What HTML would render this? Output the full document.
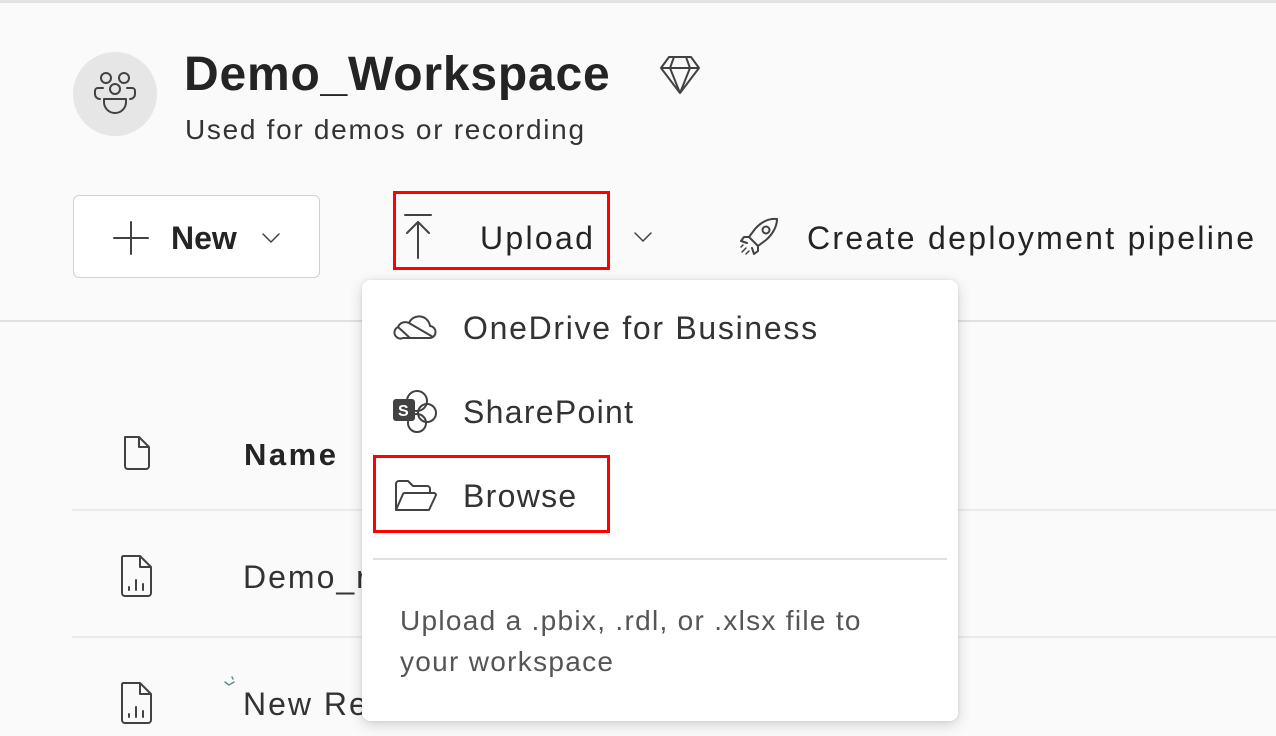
<!DOCTYPE html>
<html><head><meta charset="utf-8"><style>
*{margin:0;padding:0;box-sizing:border-box}
body{width:1276px;height:736px;background:#fafafa;position:relative;overflow:hidden;font-family:"Segoe UI","Liberation Sans",sans-serif;color:#242424}
.a{position:absolute;white-space:nowrap}
svg{position:absolute;fill:none;stroke:#424242;stroke-width:2;stroke-linecap:round;stroke-linejoin:round}
</style></head><body>
<div class="a" style="left:0;top:0;width:1276px;height:3px;background:#e3e3e3"></div>
<div class="a" style="left:73px;top:52px;width:84px;height:84px;border-radius:50%;background:#e6e6e6"></div>
<svg style="left:90px;top:70px" width="50" height="50" viewBox="0 0 50 50">
<circle cx="16" cy="8" r="5"/><circle cx="34" cy="8" r="5"/><circle cx="25" cy="19" r="5"/>
<path d="M5 21a3 3 0 0 1 3-3h5M45 21a3 3 0 0 0-3-3h-5M5 21v3a5 5 0 0 0 5 5M45 21v3a5 5 0 0 1-5 5"/>
<path d="M14 29h22v3a11 11 0 0 1-22 0z"/></svg>
<div class="a" style="left:184px;top:47px;font-size:48px;font-weight:600;letter-spacing:0.8px">Demo_Workspace</div>
<svg style="left:658px;top:54px" width="44" height="42" viewBox="0 0 44 42"><path d="M11 3h22l8 11-19 25L3 14z M3 14h38 M16 3l-4 11 10 25 10-25-4-11"/></svg>
<div class="a" style="left:185px;top:114px;font-size:28px;color:#333;letter-spacing:1.7px">Used for demos or recording</div>

<div class="a" style="left:73px;top:195px;width:247px;height:83px;border:1px solid #d1d1d1;border-radius:6px;background:#fff"></div>
<svg style="left:111px;top:220px" width="40" height="36" viewBox="0 0 40 36"><path d="M20 2v32M3 18h34"/></svg>
<div class="a" style="left:171px;top:220px;font-size:32px;font-weight:600">New</div>
<svg style="left:261px;top:232px" width="20" height="12" viewBox="0 0 20 12"><path d="M2 2l8 8 8-8" style="stroke-width:1.5"/></svg>
<div class="a" style="left:393px;top:191px;width:217px;height:79px;border:3px solid #f00"></div>
<svg style="left:402px;top:212px" width="32" height="48" viewBox="0 0 32 48"><path d="M3 3h26M16 46V10M5 21l11-11 11 11"/></svg>
<div class="a" style="left:480px;top:220px;font-size:32px;letter-spacing:2.3px">Upload</div>
<svg style="left:633px;top:231px" width="20" height="12" viewBox="0 0 20 12"><path d="M2 2l8 8 8-8" style="stroke-width:1.5"/></svg>
<svg style="left:737px;top:215px" width="46" height="44" viewBox="0 0 46 44"><path d="M40 4c-8-1-16 3-22 10l-6 8 9 9 8-6c7-6 11-14 11-21zM12 22l-5 0-3 4 6 2M21 31v5l-4 3-2-6"/><circle cx="29" cy="15" r="3.5"/><path d="M9 33l-4 4M12 36l-3 3M6 30l-2 2" style="stroke-width:1.5"/></svg>
<div class="a" style="left:807px;top:220px;font-size:32px;letter-spacing:2.3px">Create deployment pipeline</div>

<div class="a" style="left:0;top:320px;width:1276px;height:2px;background:#e0e0e0"></div>
<svg style="left:120px;top:434px" width="34" height="38" viewBox="0 0 34 38"><path d="M5 3h14l10 10v19a3 3 0 0 1-3 3H8a3 3 0 0 1-3-3z M19 3v10h10"/></svg>
<div class="a" style="left:244px;top:437px;font-size:31px;font-weight:600;letter-spacing:2.5px">Name</div>
<div class="a" style="left:72px;top:509px;width:1204px;height:2px;background:#ebebeb"></div>
<svg style="left:116px;top:553px" width="40" height="46" viewBox="0 0 40 46"><path d="M7 3h17l11 11v26a3 3 0 0 1-3 3H9a3 3 0 0 1-3-3V5a2 2 0 0 1 1-2zM24 3v11h11M13 37v-3M20 37v-10M27 37v-6"/></svg>
<div class="a" style="left:243px;top:559px;font-size:32px;color:#333;letter-spacing:2px">Demo_r</div>
<div class="a" style="left:72px;top:636px;width:1204px;height:2px;background:#ebebeb"></div>
<svg style="left:116px;top:680px" width="40" height="46" viewBox="0 0 40 46"><path d="M7 3h17l11 11v26a3 3 0 0 1-3 3H9a3 3 0 0 1-3-3V5a2 2 0 0 1 1-2zM24 3v11h11M13 37v-3M20 37v-10M27 37v-6"/></svg>
<div class="a" style="left:243px;top:686px;font-size:32px;color:#333;letter-spacing:2px">New Re</div>
<svg style="left:222px;top:674px" width="16" height="14" viewBox="0 0 16 14" style="stroke:#4a8a80"><path d="M3 8l4 3 5-3M10 3l1 2" style="stroke:#5b9189;stroke-width:1.5"/></svg>

<div class="a" style="left:362px;top:280px;width:596px;height:441px;background:#fff;border-radius:8px;box-shadow:0 4px 14px rgba(0,0,0,.16),0 0 3px rgba(0,0,0,.1)"></div>
<svg style="left:393px;top:312px" width="44" height="30" viewBox="0 0 44 30"><path d="M10 26h26a6 6 0 0 0 1-12 11 11 0 0 0-21-3 8 8 0 0 0-11 4 6 6 0 0 0 5 11zM5 15l12 11M16 11l24 14"/></svg>
<div class="a" style="left:463px;top:310px;font-size:32px;color:#333;letter-spacing:1.7px">OneDrive for Business</div>
<svg style="left:391px;top:388px" width="48" height="46" viewBox="0 0 48 46"><circle cx="26" cy="13" r="10"/><circle cx="36" cy="25" r="9"/><circle cx="26" cy="35" r="9"/><rect x="3" y="12" width="20" height="20" rx="2" fill="#424242"/><text x="7" y="28" font-size="16" font-weight="bold" fill="#fff" stroke="none" font-family="Liberation Sans">S</text></svg>
<div class="a" style="left:463px;top:394px;font-size:32px;color:#333;letter-spacing:1.3px">SharePoint</div>
<div class="a" style="left:373px;top:455px;width:237px;height:78px;border:3px solid #f00"></div>
<svg style="left:392px;top:478px" width="46" height="36" viewBox="0 0 46 36"><path d="M4 32V6a3 3 0 0 1 3-3h9l5 5h14a3 3 0 0 1 3 3v4 M4 32l7-16a2 2 0 0 1 2-1h29a2 2 0 0 1 2 2l-7 15z"/></svg>
<div class="a" style="left:463px;top:478px;font-size:32px;color:#333;letter-spacing:1.3px">Browse</div>
<div class="a" style="left:373px;top:558px;width:574px;height:2px;background:#e0e0e0"></div>
<div class="a" style="left:400px;top:600px;font-size:28px;color:#555;line-height:41px;letter-spacing:1.3px">Upload a .pbix, .rdl, or .xlsx file to<br>your workspace</div>
</body></html>
